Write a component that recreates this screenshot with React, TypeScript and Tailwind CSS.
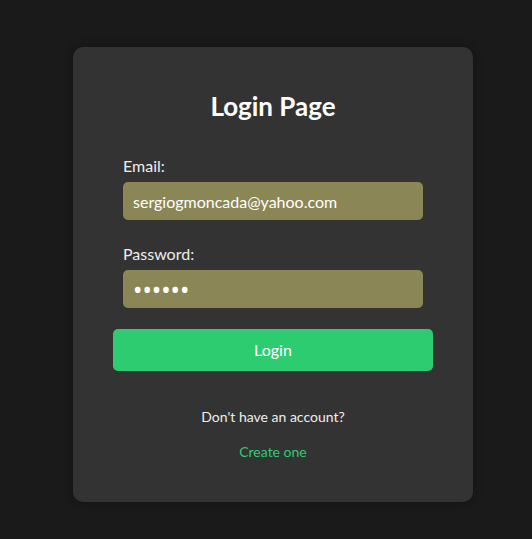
import { useState } from "react";

export default function App() {
  const [email, setEmail] = useState("sergiogmoncada@yahoo.com");
  const [password, setPassword] = useState("secret");

  return (
    <div
      className="min-h-[539px] bg-[#1a1a1a] pt-[47px] text-white"
      style={{ fontFamily: 'Lato, "Noto Sans", sans-serif' }}
    >
      <div className="ml-[73px] w-[400px] rounded-[10px] bg-[#333333] px-10 pt-[43px] pb-10 shadow-[0_0_10px_rgba(0,0,0,0.3)]">
        <h2 className="text-center text-[26px] leading-8 font-bold">Login Page</h2>

        <form
          className="mt-8 flex flex-col"
          onSubmit={(e) => e.preventDefault()}
        >
          <div className="px-[10px]">
            <label className="block text-base leading-6 text-[#eee]">Email:</label>
            <input
              type="email"
              value={email}
              onChange={(e) => setEmail(e.target.value)}
              className="mt-1 block h-[38px] w-full rounded-[5px] bg-[#8b8655] px-[10px] text-base text-white outline-none"
            />
          </div>

          <div className="mt-[22px] px-[10px]">
            <label className="block text-base leading-6 text-[#eee]">Password:</label>
            {/* bigger dots, like the native password field in the shot */}
            <input
              type="password"
              value={password}
              onChange={(e) => setPassword(e.target.value)}
              className="mt-1 block h-[38px] w-full rounded-[5px] bg-[#8b8655] px-[10px] font-['Noto_Sans'] text-[25px] text-white outline-none"
            />
          </div>

          <button
            type="submit"
            className="mt-[21px] h-[42px] w-full rounded-[5px] bg-[#2ecc71] text-base text-white"
          >
            Login
          </button>
        </form>

        <p className="mt-9 text-center text-sm leading-5 text-[#eee]">
          Don't have an account?
        </p>
        <a
          href="#"
          className="mt-[15px] block text-center text-sm leading-5 text-[#2ecc71]"
        >
          Create one
        </a>
      </div>
    </div>
  );
}
